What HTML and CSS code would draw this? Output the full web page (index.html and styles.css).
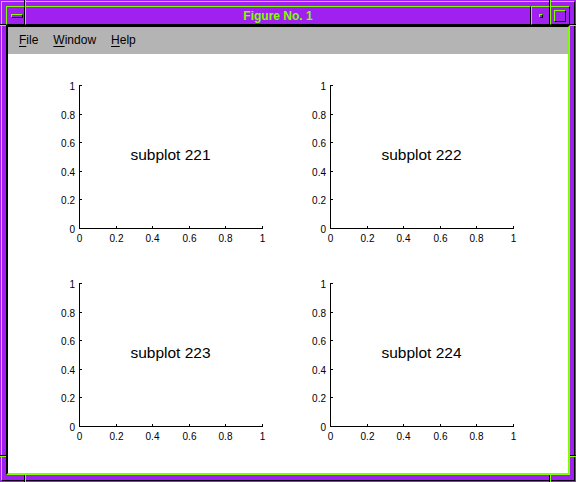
FILE: index.html
```html
<!DOCTYPE html>
<html>
<head>
<meta charset="utf-8">
<title>Figure No. 1</title>
<link rel="stylesheet" href="styles.css">
</head>
<body>
<div class="window">
  <div class="frame">
    <div class="titlebar">
      <div class="tb tb-menu"><span class="menu-bar-icon"></span></div>
      <div class="tb tb-title">Figure No. 1</div>
      <div class="tb tb-min"><span class="min-icon"></span></div>
      <div class="tb tb-max"><span class="max-icon"></span></div>
    </div>
    <div class="client">
      <div class="menubar">
        <span class="menu-item"><span class="mn">F</span>ile</span>
        <span class="menu-item"><span class="mn">W</span>indow</span>
        <span class="menu-item"><span class="mn">H</span>elp</span>
      </div>
      <div class="figure">
        <svg class="axes" width="251" height="198" viewBox="0 0 251 198">
          <g class="lines" shape-rendering="crispEdges">
            <line x1="30.5" y1="10" x2="30.5" y2="154"/>
            <line x1="30" y1="153.5" x2="214" y2="153.5"/>
            <line x1="31" y1="10.5" x2="33" y2="10.5"/>
            <line x1="31" y1="39.5" x2="33" y2="39.5"/>
            <line x1="31" y1="67.5" x2="33" y2="67.5"/>
            <line x1="31" y1="96.5" x2="33" y2="96.5"/>
            <line x1="31" y1="124.5" x2="33" y2="124.5"/>
            <line x1="67.5" y1="151" x2="67.5" y2="153"/>
            <line x1="103.5" y1="151" x2="103.5" y2="153"/>
            <line x1="140.5" y1="151" x2="140.5" y2="153"/>
            <line x1="176.5" y1="151" x2="176.5" y2="153"/>
            <line x1="213.5" y1="151" x2="213.5" y2="153"/>
          </g>
          <g class="ticklabels ylab">
            <text x="26" y="14.5">1</text>
            <text x="26" y="43.5">0.8</text>
            <text x="26" y="71.5">0.6</text>
            <text x="26" y="100.5">0.4</text>
            <text x="26" y="128.5">0.2</text>
            <text x="26" y="157.5">0</text>
          </g>
          <g class="ticklabels xlab">
            <text x="30.5" y="167">0</text>
            <text x="67.5" y="167">0.2</text>
            <text x="103.5" y="167">0.4</text>
            <text x="140.5" y="167">0.6</text>
            <text x="176.5" y="167">0.8</text>
            <text x="213.5" y="167">1</text>
          </g>
          <text class="label" x="121.5" y="85">subplot 221</text>
        </svg>
        <svg class="axes" width="251" height="198" viewBox="0 0 251 198">
          <g class="lines" shape-rendering="crispEdges">
            <line x1="30.5" y1="10" x2="30.5" y2="154"/>
            <line x1="30" y1="153.5" x2="214" y2="153.5"/>
            <line x1="31" y1="10.5" x2="33" y2="10.5"/>
            <line x1="31" y1="39.5" x2="33" y2="39.5"/>
            <line x1="31" y1="67.5" x2="33" y2="67.5"/>
            <line x1="31" y1="96.5" x2="33" y2="96.5"/>
            <line x1="31" y1="124.5" x2="33" y2="124.5"/>
            <line x1="67.5" y1="151" x2="67.5" y2="153"/>
            <line x1="103.5" y1="151" x2="103.5" y2="153"/>
            <line x1="140.5" y1="151" x2="140.5" y2="153"/>
            <line x1="176.5" y1="151" x2="176.5" y2="153"/>
            <line x1="213.5" y1="151" x2="213.5" y2="153"/>
          </g>
          <g class="ticklabels ylab">
            <text x="26" y="14.5">1</text>
            <text x="26" y="43.5">0.8</text>
            <text x="26" y="71.5">0.6</text>
            <text x="26" y="100.5">0.4</text>
            <text x="26" y="128.5">0.2</text>
            <text x="26" y="157.5">0</text>
          </g>
          <g class="ticklabels xlab">
            <text x="30.5" y="167">0</text>
            <text x="67.5" y="167">0.2</text>
            <text x="103.5" y="167">0.4</text>
            <text x="140.5" y="167">0.6</text>
            <text x="176.5" y="167">0.8</text>
            <text x="213.5" y="167">1</text>
          </g>
          <text class="label" x="121.5" y="85">subplot 222</text>
        </svg>
        <svg class="axes" width="251" height="198" viewBox="0 0 251 198">
          <g class="lines" shape-rendering="crispEdges">
            <line x1="30.5" y1="10" x2="30.5" y2="154"/>
            <line x1="30" y1="153.5" x2="214" y2="153.5"/>
            <line x1="31" y1="10.5" x2="33" y2="10.5"/>
            <line x1="31" y1="39.5" x2="33" y2="39.5"/>
            <line x1="31" y1="67.5" x2="33" y2="67.5"/>
            <line x1="31" y1="96.5" x2="33" y2="96.5"/>
            <line x1="31" y1="124.5" x2="33" y2="124.5"/>
            <line x1="67.5" y1="151" x2="67.5" y2="153"/>
            <line x1="103.5" y1="151" x2="103.5" y2="153"/>
            <line x1="140.5" y1="151" x2="140.5" y2="153"/>
            <line x1="176.5" y1="151" x2="176.5" y2="153"/>
            <line x1="213.5" y1="151" x2="213.5" y2="153"/>
          </g>
          <g class="ticklabels ylab">
            <text x="26" y="14.5">1</text>
            <text x="26" y="43.5">0.8</text>
            <text x="26" y="71.5">0.6</text>
            <text x="26" y="100.5">0.4</text>
            <text x="26" y="128.5">0.2</text>
            <text x="26" y="157.5">0</text>
          </g>
          <g class="ticklabels xlab">
            <text x="30.5" y="167">0</text>
            <text x="67.5" y="167">0.2</text>
            <text x="103.5" y="167">0.4</text>
            <text x="140.5" y="167">0.6</text>
            <text x="176.5" y="167">0.8</text>
            <text x="213.5" y="167">1</text>
          </g>
          <text class="label" x="121.5" y="85">subplot 223</text>
        </svg>
        <svg class="axes" width="251" height="198" viewBox="0 0 251 198">
          <g class="lines" shape-rendering="crispEdges">
            <line x1="30.5" y1="10" x2="30.5" y2="154"/>
            <line x1="30" y1="153.5" x2="214" y2="153.5"/>
            <line x1="31" y1="10.5" x2="33" y2="10.5"/>
            <line x1="31" y1="39.5" x2="33" y2="39.5"/>
            <line x1="31" y1="67.5" x2="33" y2="67.5"/>
            <line x1="31" y1="96.5" x2="33" y2="96.5"/>
            <line x1="31" y1="124.5" x2="33" y2="124.5"/>
            <line x1="67.5" y1="151" x2="67.5" y2="153"/>
            <line x1="103.5" y1="151" x2="103.5" y2="153"/>
            <line x1="140.5" y1="151" x2="140.5" y2="153"/>
            <line x1="176.5" y1="151" x2="176.5" y2="153"/>
            <line x1="213.5" y1="151" x2="213.5" y2="153"/>
          </g>
          <g class="ticklabels ylab">
            <text x="26" y="14.5">1</text>
            <text x="26" y="43.5">0.8</text>
            <text x="26" y="71.5">0.6</text>
            <text x="26" y="100.5">0.4</text>
            <text x="26" y="128.5">0.2</text>
            <text x="26" y="157.5">0</text>
          </g>
          <g class="ticklabels xlab">
            <text x="30.5" y="167">0</text>
            <text x="67.5" y="167">0.2</text>
            <text x="103.5" y="167">0.4</text>
            <text x="140.5" y="167">0.6</text>
            <text x="176.5" y="167">0.8</text>
            <text x="213.5" y="167">1</text>
          </g>
          <text class="label" x="121.5" y="85">subplot 224</text>
        </svg>
      </div>
    </div>
  </div>
  <span class="mk mk-v mk-tl"></span>
  <span class="mk mk-v mk-tr"></span>
  <span class="mk mk-v mk-bl"></span>
  <span class="mk mk-v mk-br"></span>
  <span class="mk mk-h mk-lt"></span>
  <span class="mk mk-h mk-lb"></span>
  <span class="mk mk-h mk-rt"></span>
  <span class="mk mk-h mk-rb"></span>
</div>
</body>
</html>
```
FILE: styles.css
```css
html, body {
  margin: 0;
  padding: 0;
}
body {
  width: 576px;
  height: 482px;
  overflow: hidden;
  background: #a020f0;
  font-family: "Liberation Sans", Arial, sans-serif;
}
.window {
  position: relative;
  width: 576px;
  height: 482px;
  box-sizing: border-box;
  padding: 1px;
  background: #a020f0;
}
.frame {
  height: 100%;
  box-sizing: border-box;
  border: 1px solid;
  border-color: #7fff00 #000 #000 #7fff00;
  padding: 4px 4px 5px 4px;
  display: flex;
  flex-direction: column;
}
.titlebar {
  display: flex;
  height: 19px;
  flex: none;
}
.tb {
  box-sizing: border-box;
  height: 19px;
  border: 1px solid;
  border-color: #7fff00 #000 #000 #7fff00;
  display: flex;
  align-items: center;
  justify-content: center;
}
.tb-menu { width: 19px; padding-left: 2px; }
.tb-title {
  flex: 1;
  color: #7fff00;
  font-weight: bold;
  font-size: 12px;
  line-height: 15px;
  padding-top: 2px;
  align-items: flex-start;
}
.tb-min { width: 19px; }
.tb-max { width: 20px; padding-right: 1px; }
.menu-bar-icon {
  display: block;
  width: 12px;
  height: 4px;
  box-sizing: border-box;
  border: 1px solid;
  border-color: #7fff00 #000 #000 #7fff00;
}
.min-icon {
  display: block;
  width: 4px;
  height: 4px;
  box-sizing: border-box;
  border: 1px solid;
  border-color: #7fff00 #000 #000 #7fff00;
}
.max-icon {
  display: block;
  width: 12px;
  height: 12px;
  box-sizing: border-box;
  border: 1px solid;
  border-color: #7fff00 #000 #000 #7fff00;
}
.client {
  flex: 1;
  min-height: 0;
  border: 2px solid;
  border-color: #000 #7fff00 #7fff00 #000;
  display: flex;
  flex-direction: column;
  background: #fff;
}
.menubar {
  flex: none;
  height: 27px;
  box-sizing: border-box;
  background: #b4b4b4;
  display: flex;
  gap: 15px;
  padding-left: 11px;
  font-size: 12px;
  line-height: 27px;
  color: #000;
}
.mn {
  text-decoration: underline;
  text-underline-offset: 2px;
}
.figure {
  flex: 1;
  min-height: 0;
  padding: 21px 0 0 41px;
  display: grid;
  grid-template-columns: 251px 251px;
  grid-template-rows: 198px 198px;
  align-content: start;
}
.axes { display: block; }
.lines line {
  stroke: #000;
  stroke-width: 1;
  fill: none;
}
.ticklabels text {
  font-family: "Liberation Sans", Arial, sans-serif;
  font-size: 10px;
  fill: #000;
}
.ylab text { text-anchor: end; }
.xlab text { text-anchor: middle; }
.label {
  font-family: "Liberation Sans", Arial, sans-serif;
  font-size: 15.5px;
  fill: #000;
  text-anchor: middle;
}
.mk { position: absolute; display: block; }
.mk-v {
  width: 1px;
  background: #7fff00;
  border-left: 1px solid #000;
}
.mk-h {
  height: 1px;
  background: #7fff00;
  border-top: 1px solid #000;
}
.mk-tl { left: 24px; top: 0; height: 6px; }
.mk-tr { left: 549px; top: 0; height: 6px; }
.mk-bl { left: 24px; top: 475px; height: 7px; }
.mk-br { left: 549px; top: 475px; height: 7px; }
.mk-lt { left: 0; top: 24px; width: 6px; }
.mk-lb { left: 0; top: 455px; width: 6px; }
.mk-rt { left: 570px; top: 24px; width: 6px; }
.mk-rb { left: 570px; top: 455px; width: 6px; }
```
